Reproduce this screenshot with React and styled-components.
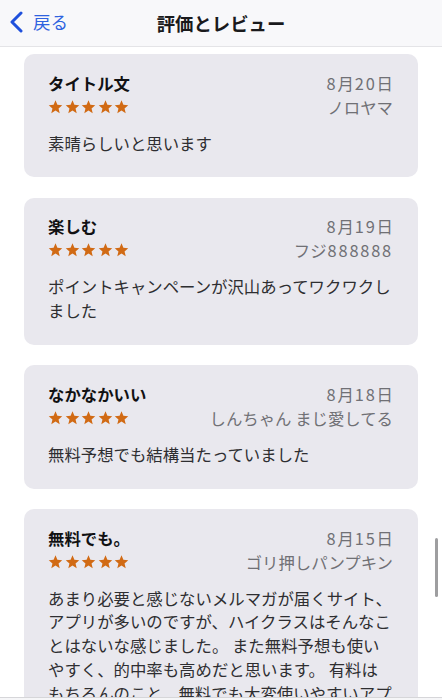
import React from 'react';
import styled, { createGlobalStyle } from 'styled-components';

const reviews = [
    {
        title: 'タイトル文',
        date: '8月20日',
        author: 'ノロヤマ',
        body: '素晴らしいと思います',
    },
    {
        title: '楽しむ',
        date: '8月19日',
        author: 'フジ888888',
        body: 'ポイントキャンペーンが沢山あってワクワクしました',
    },
    {
        title: 'なかなかいい',
        date: '8月18日',
        author: 'しんちゃん まじ愛してる',
        body: '無料予想でも結構当たっていました',
    },
    {
        title: '無料でも。',
        date: '8月15日',
        author: 'ゴリ押しパンプキン',
        body: 'あまり必要と感じないメルマガが届くサイト、\nアプリが多いのですが、ハイクラスはそんなことはないな感じました。 また無料予想も使いやすく、的中率も高めだと思います。 有料はもちろんのこと、無料でも大変使いやすいアプリです。',
    },
];

// digits in the date / name use a wider figure than Noto's
const withNums = (text) =>
    text.split(/(\d+)/).map((part, i) =>
        /^\d+$/.test(part) ? <Num key={i}>{part}</Num> : part
    );

const Star = () => (
    <svg width="15" height="14" viewBox="0 0 24 23">
        <path d="M12 0.6l3.1 7.4 8 .6-6.1 5.2 1.9 7.8L12 17.4l-6.9 4.2 1.9-7.8L.9 8.6l8-.6z" fill="#d16a14" />
    </svg>
);

const App = () => {
    return (
        <Wrapper>
            <GlobalStyle />
            <Header>
                <BackBtn>
                    <svg width="16" height="22" viewBox="0 0 16 22">
                        <polyline points="13,2 4,11 13,20" fill="none" stroke="#1f50dc" strokeWidth="3" strokeLinecap="round" strokeLinejoin="round" />
                    </svg>
                    <BackLabel>戻る</BackLabel>
                </BackBtn>
                <HeaderTitle>評価とレビュー</HeaderTitle>
            </Header>
            <ListWrapper>
                {reviews.map((r, i) => (
                    <Card key={i}>
                        <CardTop>
                            <TitleCol>
                                <CardTitle>{r.title}</CardTitle>
                                <Stars>
                                    {[0, 1, 2, 3, 4].map((s) => <Star key={s} />)}
                                </Stars>
                            </TitleCol>
                            <MetaCol>
                                <Meta>{withNums(r.date)}</Meta>
                                <Meta>{withNums(r.author)}</Meta>
                            </MetaCol>
                        </CardTop>
                        <Body>{r.body}</Body>
                    </Card>
                ))}
            </ListWrapper>
            <ScrollThumb />
            <BottomBar />
        </Wrapper>
    );
};

export default App;


const GlobalStyle = createGlobalStyle`
    html, body {
        margin: 0;
        padding: 0;
        height: 700px;
        overflow: hidden;
        background-color: #ffffff;
    }
    body {
        font-family: "Noto Sans CJK JP", "Noto Sans", sans-serif;
    }
`;
const Wrapper = styled.section`
    display: flex;
    flex-direction: column;
    width: 442px;
    background-color: #ffffff;
`;
const Header = styled.header`
    position: relative;
    display: flex;
    justify-content: center;
    align-items: center;
    height: 46px;
    background-color: #f8f8fa;
    border-bottom: 1px solid #e4e4e7;
    flex-shrink: 0;
`;
const BackBtn = styled.div`
    position: absolute;
    left: 8px;
    top: 11px;
    display: flex;
    align-items: center;
    gap: 9px;
    cursor: pointer;
`;
const BackLabel = styled.span`
    font-size: 17.5px;
    line-height: 22px;
    color: #2f63e0;
`;
const HeaderTitle = styled.h1`
    margin: 0;
    font-size: 18.4px;
    font-weight: 700;
    line-height: 24px;
    color: #1a1a1c;
`;
const ListWrapper = styled.div`
    display: flex;
    flex-direction: column;
    gap: 20.5px;
    padding: 7px 24px 0 24px;
`;
const Card = styled.article`
    display: flex;
    flex-direction: column;
    gap: 14px;
    padding: 17.5px 25px 22px 24px;
    border-radius: 10px;
    background-color: #e9e8ee;
`;
const CardTop = styled.div`
    display: flex;
    justify-content: space-between;
    align-items: flex-start;
`;
const TitleCol = styled.div`
    display: flex;
    flex-direction: column;
    gap: 2px;
`;
const CardTitle = styled.div`
    font-size: 16.4px;
    font-weight: 700;
    line-height: 22px;
    color: #111113;
`;
const Stars = styled.div`
    display: flex;
    align-items: center;
    gap: 1.6px;
    height: 22px;
`;
const MetaCol = styled.div`
    display: flex;
    flex-direction: column;
    align-items: flex-end;
    gap: 2px;
`;
const Meta = styled.div`
    font-size: 16.4px;
    line-height: 22px;
    color: #707075;
    white-space: nowrap;
`;
const Num = styled.span`
    letter-spacing: 1.8px;
    margin-left: 1px;
`;
const Body = styled.p`
    margin: 0;
    font-size: 16.4px;
    line-height: 23.8px;
    color: #2e2e31;
    white-space: pre-line;
`;
const ScrollThumb = styled.div`
    position: fixed;
    left: 435px;
    top: 538px;
    width: 3px;
    height: 59px;
    border-radius: 2px;
    background-color: #9e9ea0;
`;
const BottomBar = styled.div`
    position: fixed;
    left: 0;
    bottom: 0;
    width: 442px;
    height: 2px;
    border-top: 1px solid #d6d6d9;
    background-color: #f6f6f8;
`;
